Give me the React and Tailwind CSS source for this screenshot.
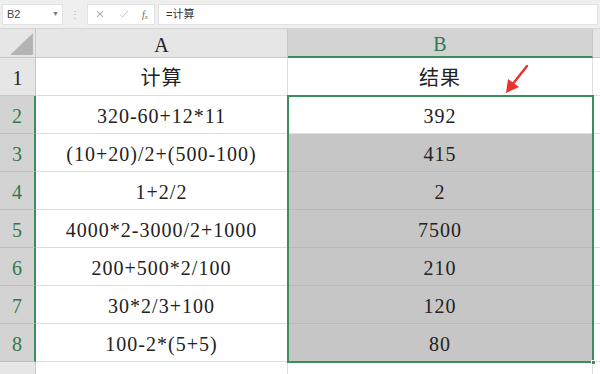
import React from "react";
import { IoClose, IoCheckmark } from "react-icons/io5";

const rows = [
  { n: 1, a: "计算", b: "结果" },
  { n: 2, a: "320-60+12*11", b: "392" },
  { n: 3, a: "(10+20)/2+(500-100)", b: "415" },
  { n: 4, a: "1+2/2", b: "2" },
  { n: 5, a: "4000*2-3000/2+1000", b: "7500" },
  { n: 6, a: "200+500*2/100", b: "210" },
  { n: 7, a: "30*2/3+100", b: "120" },
  { n: 8, a: "100-2*(5+5)", b: "80" },
  { n: 9, a: "", b: "" },
];

const serif = "font-['Liberation_Serif','Noto_Sans_CJK_SC',serif]";

const Toolbar = () => (
  <div className="h-[29px] bg-[#efefef] border-b border-[#d6d6d6] flex items-center gap-[3px] px-[2px] font-['Liberation_Sans','Noto_Sans_CJK_SC',sans-serif] text-[11px] text-[#444]">
    <div className="w-[61px] h-[21px] bg-white border border-[#e2e2e2] flex items-center justify-between pl-[4px] pr-[3px]">
      <span>B2</span>
      <span className="text-[7px] text-[#777]">▼</span>
    </div>
    <div className="w-[18px] flex justify-center text-[#b5b5b5] text-[10px]">⋮</div>
    <div className="w-[68px] h-[21px] bg-white border border-[#e2e2e2] flex items-center justify-around text-[#b0b0b0]">
      <IoClose size={12} />
      <IoCheckmark size={12} />
      <span className="italic text-[10px] text-[#666] font-['Liberation_Serif',serif]">
        f<sub className="text-[7px]">x</sub>
      </span>
    </div>
    <div className="flex-1 h-[21px] bg-white border border-[#e2e2e2] flex items-center pl-[7px] text-[#333]">
      =计算
    </div>
  </div>
);

const HeaderRow = () => (
  <div className={`flex h-[29px] ${serif}`}>
    <div className="w-[36px] shrink-0 bg-[#e6e6e6] border-r border-b border-[#c8c8c8] flex items-end justify-end pr-[2px] pb-[2px]">
      <svg width="23" height="22" viewBox="0 0 23 22">
        <polygon points="23,0 23,22 0,22" fill="#b4b4b4" />
      </svg>
    </div>
    <div className="w-[252px] shrink-0 bg-[#e6e6e6] border-r border-b border-[#c8c8c8] flex items-center justify-center pt-[3px] text-[20px] text-[#222]">
      A
    </div>
    <div className="w-[305px] shrink-0 bg-[#d3d3d3] border-r border-[#c8c8c8] border-b-2 border-b-[#3d8c5c] flex items-center justify-center pt-[3px] text-[20px] text-[#2f7a4c]">
      B
    </div>
    <div className="flex-1 bg-[#e6e6e6] border-b border-[#c8c8c8]" />
  </div>
);

const Row = ({ r }) => {
  const sel = r.n >= 2 && r.n <= 8;
  const grey = r.n >= 3 && r.n <= 8;
  return (
    <div className={`flex h-[38px] ${serif} text-[20px] tracking-[1px] text-[#222]`}>
      <div
        className={`w-[36px] shrink-0 flex items-end justify-center pb-[2px] tracking-normal border-b ${
          sel
            ? "bg-[#d3d3d3] text-[#2f7a4c] border-b-[#bdbdbd] border-r-2 border-r-[#3d8c5c]"
            : "bg-[#e6e6e6] border-b-[#c8c8c8] border-r border-r-[#c8c8c8]"
        }`}
      >
        {r.n}
      </div>
      <div className="w-[252px] shrink-0 bg-white border-r border-b border-[#dedede] flex items-center justify-center pt-[2px]">
        {r.a}
      </div>
      <div
        className={`w-[305px] shrink-0 border-r border-b flex items-center justify-center pt-[2px] ${
          grey ? "bg-[#c6c6c6] border-[#b9b9b9]" : "bg-white border-[#dedede]"
        }`}
      >
        {r.b}
      </div>
      <div className="flex-1 bg-white border-b border-[#dedede]" />
    </div>
  );
};

const App = () => {
  return (
    <div className="w-[600px] h-[374px] overflow-hidden bg-white relative">
      <Toolbar />
      <div className="relative">
        <HeaderRow />
        {rows.map((r) => (
          <Row key={r.n} r={r} />
        ))}
        {/* selection B2:B8 */}
        <div className="absolute left-[287px] top-[66px] w-[307px] h-[268px] border-2 border-[#3d8c5c] pointer-events-none" />
        <div className="absolute left-[591px] top-[331px] w-[5px] h-[5px] bg-[#3d8c5c] border border-white" />
        {/* red annotation arrow */}
        <svg
          className="absolute left-[500px] top-[34px]"
          width="34"
          height="34"
          viewBox="0 0 34 34"
        >
          <line x1="27" y1="3" x2="12" y2="22" stroke="#ee2f2f" strokeWidth="2.4" strokeLinecap="round" />
          <polygon points="6,30 8,16 19,24" fill="#ee2f2f" />
        </svg>
      </div>
    </div>
  );
};

export default App;
